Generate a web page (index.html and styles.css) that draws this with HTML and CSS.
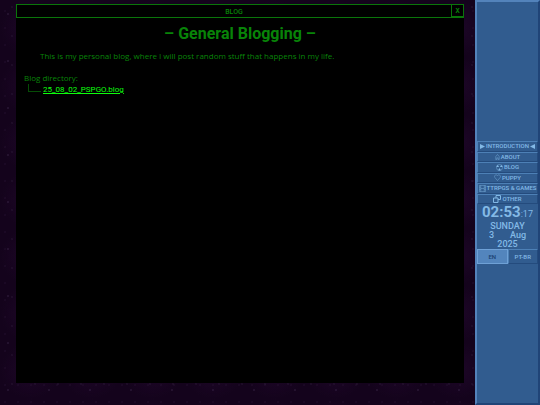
FILE: index.html
```html
<!DOCTYPE html>
<html lang="en">
<head>
<meta charset="utf-8">
<title>Blog</title>
<link rel="stylesheet" href="styles.css">
</head>
<body>
<main class="desktop">
	<section class="window">
		<header class="titlebar">
			<span class="titlebar-text">BLOG</span>
			<button class="close" type="button">X</button>
		</header>
		<div class="content">
			<h1>– General Blogging –</h1>
			<p class="intro">This is my personal blog, where I will post random stuff that happens in my life.</p>
			<p class="directory">Blog directory:</p>
			<ul class="tree">
				<li><a href="#">25_08_02_PSPGO.blog</a></li>
			</ul>
		</div>
	</section>
</main>

<aside class="sidebar">
	<nav class="menu">
		<a href="#">
			<svg class="arrow" viewBox="0 0 6 6"><path d="M0 0L6 3L0 6Z" fill="currentColor"/></svg>
			INTRODUCTION
			<svg class="arrow" viewBox="0 0 6 6"><path d="M6 0L0 3L6 6Z" fill="currentColor"/></svg>
		</a>
		<a href="#">
			<svg class="home" viewBox="0 0 10 14"><path d="M1 6L5 1L9 6M1 6V13H3.500V9H6.500V13H9V6" class="line"/></svg>
			ABOUT
		</a>
		<a href="#">
			<svg class="icon" viewBox="0 0 16 16"><circle cx="8" cy="8" r="7" class="line"/><path d="M7 7L4 2A7 7 0 0 0 1 7ZM9 7H15A7 7 0 0 0 12 2ZM8 9L5 14A7 7 0 0 0 11 14Z" fill="currentColor"/></svg>
			BLOG
		</a>
		<a href="#">
			<svg class="icon" viewBox="0 0 16 16"><path d="M8 15L2 8C-1 4 5 -1 8 4C11 -1 17 4 14 8Z" class="line"/></svg>
			PUPPY
		</a>
		<a href="#">
			<svg class="icon" viewBox="0 0 16 16"><path d="M1 1H15V15H1ZM4 1V15M12 1V15M4 8H12M1 5H4M1 10H4M12 5H15M12 10H15" class="line"/></svg>
			TTRPGS &amp; GAMES
		</a>
		<a href="#">
			<svg class="icon windows" viewBox="0 0 16 16"><path d="M6 6V1H15V9H10M1 6H10V15H1Z" class="line"/></svg>
			OTHER
		</a>
	</nav>
	<div class="clock">
		<div class="time">02:53<span class="seconds">:17</span></div>
		<div>SUNDAY</div>
		<div class="date"><span>3</span><span>Aug</span></div>
		<div>2025</div>
	</div>
	<div class="languages">
		<button class="active" type="button">EN</button>
		<button type="button">PT-BR</button>
	</div>
</aside>
</body>
</html>
```

FILE: styles.css
```css
* {
	box-sizing: border-box;
}
body {
	margin: 0;
	height: 100vh;
	display: flex;
	font-family: Roboto, "Liberation Sans", sans-serif;
	/* night sky, layers of stars over purple clouds */
	background-color: #14031c;
	background-image:
		radial-gradient(circle at 8px 14px, #49345a 0, transparent 1px),
		radial-gradient(circle at 29px 37px, #3c2549 0, transparent 1px),
		radial-gradient(circle at 12px 7px, #32203f 0, transparent 1px),
		radial-gradient(circle at 5px 11px, #2b1538 0, transparent 1px),
		radial-gradient(ellipse at center, #1d0627 0, transparent 70%);
	background-size: 41px 47px, 53px 31px, 23px 29px, 13px 17px, 61px 57px;
}
.desktop {
	flex: 1;
	padding: 4px 11px 22px 16px;
}
.window {
	height: 100%;
	background: #000;
	color: #088408;
}
.titlebar {
	display: flex;
	height: 14px;
	border: 1px solid #0a750a;
}
.titlebar-text {
	flex: 1;
	text-align: center;
	font-size: 7px;
	font-weight: 500;
	line-height: 14px;
}
.close {
	width: 12px;
	padding: 0;
	border: 1px solid #0a750a;
	border-width: 0 0 1px 1px;
	background: #000;
	color: #088408;
	font: bold 7px/10px "Liberation Mono", monospace;
}
.content {
	padding: 6px 8px;
	font-family: "Open Sans", sans-serif;
	font-size: 8px;
	line-height: 12px;
}
h1 {
	margin: 0;
	text-align: center;
	font-family: Roboto, sans-serif;
	font-size: 16px;
	line-height: 20px;
}
p {
	margin: 0;
}
.intro {
	padding: 6px 16px 10px;
}
.tree {
	list-style: none;
	margin: 0;
	padding: 0 4px;
}
.tree li {
	display: flex;
}
.tree li::before {
	content: "";
	width: 12px;
	height: 7px;
	margin-right: 2px;
	border-left: 1px solid #064d06;
	border-bottom: 1px solid #064d06;
}
.tree a {
	color: #0dff0d;
	font-family: Roboto, sans-serif;
}
.sidebar {
	width: 65px;
	display: flex;
	flex-direction: column;
	justify-content: center;
	background: #315c8f;
	color: #83b9e6;
	border: 2px solid;
	border-color: #5383bb #204477 #204477 #5383bb;
}
.menu {
	display: grid;
	grid-template-rows: repeat(6, 1fr);
	height: 63px;
}
.menu a {
	display: flex;
	align-items: center;
	justify-content: center;
	gap: 1px;
	color: inherit;
	font-size: 6px;
	font-weight: 500;
	line-height: 8px;
	text-decoration: none;
	white-space: nowrap;
	border: 1px solid;
	border-color: #4d80b6 #244b7d #244b7d #4d80b6;
}
.arrow {
	width: 5px;
	height: 5px;
}
.home {
	width: 5px;
	height: 6px;
}
.icon {
	width: 7px;
	height: 7px;
}
.windows {
	width: 8px;
	height: 8px;
}
.line {
	fill: none;
	stroke: currentColor;
	stroke-width: 1;
}
.windows .line {
	stroke-width: 2;
}
.clock {
	padding-top: 1px;
	text-align: center;
	font-weight: 500;
	font-size: 9px;
	line-height: 9px;
}
.time {
	font-size: 15px;
	line-height: 15px;
	font-weight: bold;
}
.seconds {
	font-size: 9px;
	font-weight: normal;
}
.date {
	display: flex;
	justify-content: space-between;
	padding: 0 12px;
}
.languages {
	display: flex;
	height: 15px;
}
.languages button {
	flex: 1;
	padding: 0;
	background: #315c8f;
	color: #83b9e6;
	border: 1px solid;
	border-color: #4d80b6 #244b7d #244b7d #4d80b6;
	font: 500 6px/8px Roboto, sans-serif;
}
.languages .active {
	background: #5385bd;
	color: #193f70;
	border-color: #6fa1d6;
}
```
